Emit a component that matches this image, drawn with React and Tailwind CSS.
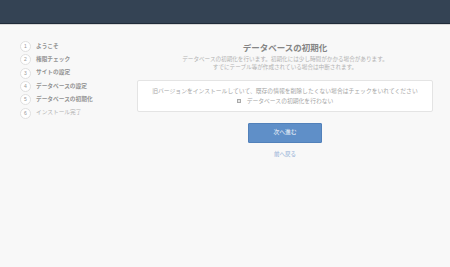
import React from 'react';

const STEPS = [
  { n: 1, label: 'ようこそ', done: true },
  { n: 2, label: '権限チェック', done: true },
  { n: 3, label: 'サイトの設定', done: true },
  { n: 4, label: 'データベースの設定', done: true },
  { n: 5, label: 'データベースの初期化', done: true },
  { n: 6, label: 'インストール完了', done: false },
];

const font = { fontFamily: '"Liberation Sans", "Noto Sans CJK JP", sans-serif' };

export default function App() {
  return (
    <div className="min-h-[267px] w-[450px] bg-[#f8f8f8]" style={font}>
      {/* ヘッダー */}
      <div className="h-[24px] bg-[#344354] border-b border-[#1f2b39] shadow-[0_1px_0_#d9d9d9]" />

      <div className="flex">
        {/* ステップ一覧 */}
        <div className="w-[137px] pl-[20px] pt-[16px] flex flex-col">
          {STEPS.map((s) => (
            <div key={s.n} className="h-[13.33px] flex items-center gap-[5px]">
              <div className="w-[11px] h-[11px] rounded-full border border-[#e0e0e0] bg-white flex items-center justify-center text-[5px] leading-none text-[#999]">
                {s.n}
              </div>
              <span
                className={
                  s.done
                    ? 'text-[5.7px] font-bold text-[#939393] leading-none'
                    : 'text-[5.7px] text-[#b3b3b3] leading-none'
                }
              >
                {s.label}
              </span>
            </div>
          ))}
        </div>

        {/* メイン */}
        <div className="w-[296px] pt-[18px] flex flex-col items-center">
          <h1 className="text-[8.5px] leading-[12px] font-bold text-[#858585]">データベースの初期化</h1>
          <p className="mt-[1px] text-[5.6px] leading-[8px] text-[#b2b2b2] text-center">
            データベースの初期化を行います。初期化には少し時間がかかる場合があります。
            <br />
            すでにテーブル等が作成されている場合は中断されます。
          </p>

          <div className="mt-[9px] w-full bg-white border border-[#e4e4e4] rounded-[2px] pt-[6px] pb-[6px] flex flex-col items-center gap-[2px]">
            <div className="text-[5.8px] leading-[8px] text-[#a6a6a6]">
              旧バージョンをインストールしていて、既存の情報を削除したくない場合はチェックをいれてください
            </div>
            <label className="flex items-center gap-[6px] text-[5.8px] leading-[8px] text-[#a6a6a6]">
              <span className="w-[4px] h-[4px] border border-[#aaa] bg-[#e6e6e6]" />
              データベースの初期化を行わない
            </label>
          </div>

          <button className="mt-[11px] w-[74px] h-[20px] bg-[#5f8fc8] border border-[#5281ba] rounded-[1px] text-[#f0f4fa] text-[5.8px] leading-none">
            次へ進む
          </button>
          <a className="mt-[7px] text-[5.5px] leading-[8px] text-[#8aaad3]">前へ戻る</a>
        </div>
      </div>
    </div>
  );
}
